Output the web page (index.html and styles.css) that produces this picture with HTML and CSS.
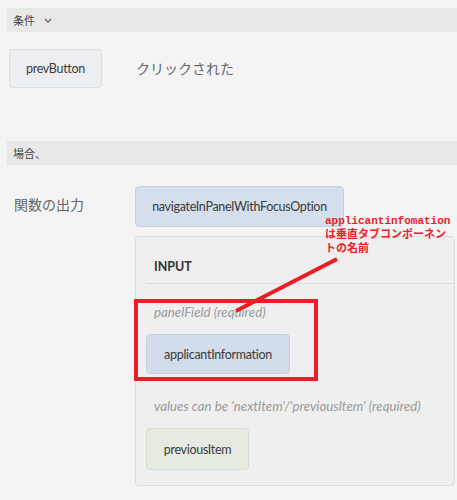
FILE: index.html
```html
<!DOCTYPE html>
<html lang="ja">
<head>
<meta charset="utf-8">
<link rel="stylesheet" href="styles.css">
</head>
<body>
<div class="page">
  <div class="section-bar">
    <span class="bar-title">条件</span>
    <svg class="chev" width="8" height="5" viewBox="0 0 8 5"><path d="M1 1 L4 4 L7 1" fill="none" stroke="#666" stroke-width="1.3"/></svg>
  </div>
  <div class="when-row">
    <div class="token token-grey">prevButton</div>
    <div class="event-text">クリックされた</div>
  </div>
  <div class="section-bar bar-then">
    <span class="bar-title">場合、</span>
  </div>
  <div class="then-row">
    <div class="then-label">関数の出力</div>
    <div class="then-body">
      <div class="token token-blue token-fn">navigateInPanelWithFocusOption</div>
      <div class="panel">
        <div class="panel-head">INPUT</div>
        <div class="param-label">panelField (required)</div>
        <div class="token token-blue token-arg">applicantInformation</div>
        <div class="param-label">values can be 'nextItem'/'previousItem' (required)</div>
        <div class="token token-green token-arg">previousItem</div>
      </div>
    </div>
  </div>

  <div class="callout-box"></div>
  <svg class="callout-line" width="457" height="500" viewBox="0 0 457 500"><line x1="236" y1="311" x2="337" y2="259" stroke="#ee1c25" stroke-width="4"/></svg>
  <div class="callout-text">applicantinfomation<br>は垂直タブコンポーネン<br>トの名前</div>
</div>
</body>
</html>
```

FILE: styles.css
```css
html, body {
  margin: 0;
  padding: 0;
  background: #f4f4f4;
}
body {
  width: 457px;
  height: 500px;
  overflow: hidden;
  font-family: Lato, "Noto Sans CJK JP", sans-serif;
  color: #333;
}
.page {
  position: relative;
  padding: 8px 0 0 7px;
  height: 492px;
}
.section-bar {
  height: 24px;
  background: #e8e8e8;
  display: flex;
  align-items: center;
  padding-left: 6px;
  gap: 9px;
}
.bar-title {
  font-size: 11px;
  color: #444;
}
.chev { margin-top: 1px; }
.when-row {
  display: flex;
  align-items: center;
  padding: 17px 0 0 2px;
  height: 39px;
}
.token {
  display: flex;
  align-items: center;
  justify-content: center;
  box-sizing: border-box;
  border-radius: 4px;
  font-size: 12.5px;
  letter-spacing: -0.3px;
  color: #3a3a3a;
}
.token-grey {
  width: 93px;
  height: 39px;
  background: #eceef2;
  border: 1px solid #dadde3;
}
.event-text {
  margin-left: 34px;
  font-size: 14px;
  color: #666;
  margin-top: -2px;
}
.bar-then {
  margin-top: 53px;
}
.then-row {
  display: grid;
  grid-template-columns: 128px 1fr;
  padding-top: 21px;
}
.then-label {
  font-size: 14px;
  color: #666;
  padding: 8px 0 0 7px;
}
.token-blue {
  background: #d5deeb;
  border: 1px solid #c6d0e0;
}
.token-fn {
  width: 209px;
  height: 41px;
}
.panel {
  margin-top: 9px;
  width: 320px;
  height: 250px;
  box-sizing: border-box;
  background: #efefef;
  border: 1px solid #dcdcdc;
  border-radius: 4px;
  padding: 0 0 0 10px;
}
.panel-head {
  height: 47px;
  box-sizing: border-box;
  padding: 22px 0 0 8px;
  font-size: 12.5px;
  font-weight: 700;
  color: #333;
  border-bottom: 1px solid #dedede;
}
.param-label {
  font-size: 13.3px;
  font-style: italic;
  color: #9a9a9a;
  padding-left: 8px;
  height: 20px;
  line-height: 20px;
}
.panel-head + .param-label { margin-top: 18px; }
.token-arg { height: 40px; margin-top: 12px; }
.token-arg + .param-label { margin-top: 22px; }
.panel .token-blue { width: 144px; background: #d3dcea; }
.token-green {
  width: 103px;
  height: 42px;
  background: #e6ebe2;
  border: 1px solid #d6dbd3;
}
.callout-box {
  position: absolute;
  left: 134px;
  top: 299px;
  width: 184px;
  height: 82px;
  box-sizing: border-box;
  border: 4px solid #ee1c25;
}
.callout-line {
  position: absolute;
  left: 0;
  top: 0;
  pointer-events: none;
}
.callout-text {
  position: absolute;
  left: 325px;
  top: 214px;
  font-family: "Liberation Mono", "Noto Sans CJK JP", monospace;
  font-size: 11px;
  font-weight: 700;
  line-height: 14px;
  color: #ee1c25;
}
```
